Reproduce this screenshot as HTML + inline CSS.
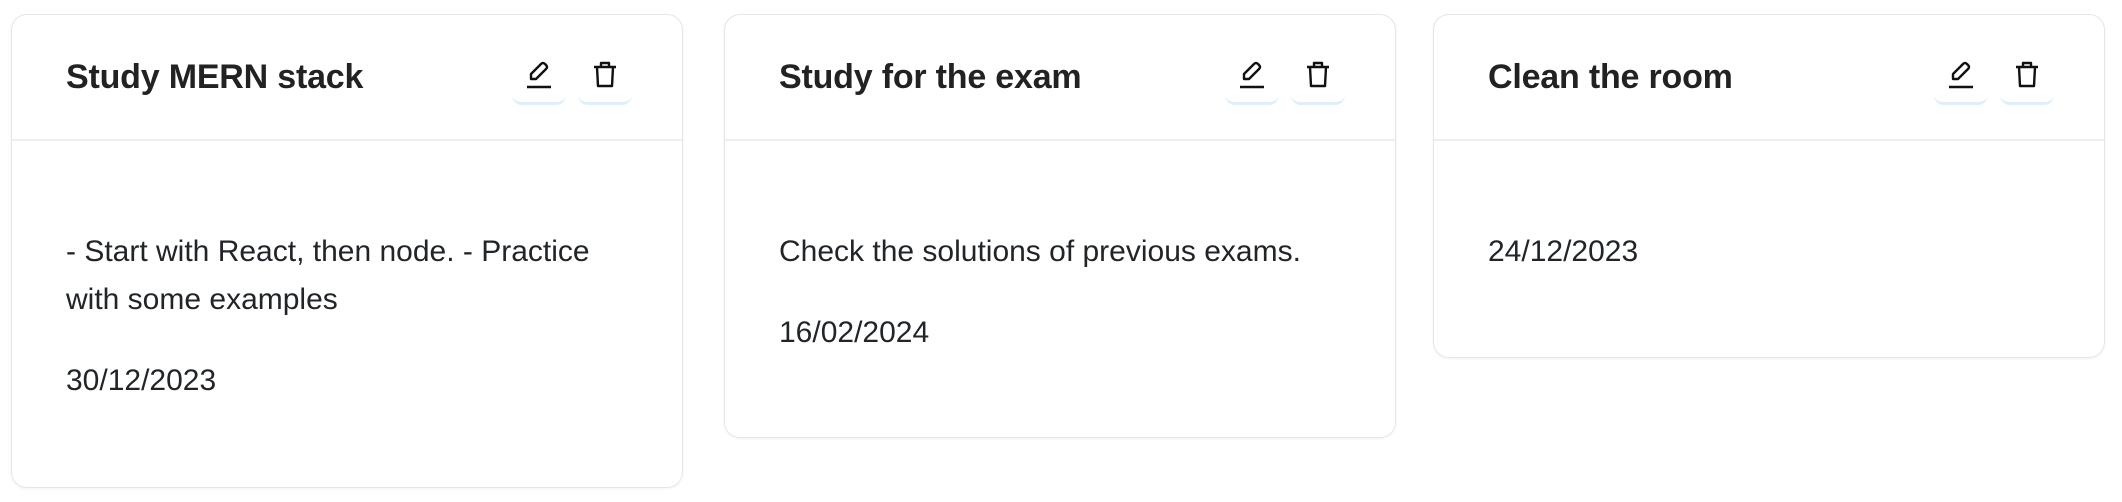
<!DOCTYPE html>
<html><head><style>
body{margin:0;width:2122px;height:502px;background:#fff;font-family:"Liberation Sans",sans-serif;color:#212529;position:relative;overflow:hidden}
.card{position:absolute;top:14px;width:672px;border:1px solid #e6e6e6;border-radius:16px;box-sizing:border-box;box-shadow:0 1px 3px rgba(0,0,0,0.05)}
.hd{height:124px;border-bottom:2px solid #eee;position:relative}
.t{position:absolute;left:54px;top:44px;font-size:34px;font-weight:bold;color:#222;line-height:36px;letter-spacing:-0.2px}
.btn{position:absolute;top:37px;width:54px;height:50px;border-radius:10px;border-bottom:3px solid #d9f1fc}
.btn svg{position:absolute;left:14px;top:8px}
.b1{left:500px}.b2{left:566px}
.bd{padding:87px 54px 0 54px;font-size:30px;line-height:48px;white-space:nowrap}
.d{margin-top:33px}
</style></head><body>
<div class="card" style="left:11px;height:474px">
<div class="hd"><div class="t">Study MERN stack</div>
<div class="btn b1"><svg width="26" height="30" viewBox="0 0 26 30" fill="none" stroke="#111" stroke-width="2.4" stroke-linejoin="round"><path d="M5 19 L5 14 L15 4 Q17 2 19 4 L20 5 Q22 7 20 9 L10 19 Z"/><path d="M1 27 H25"/></svg></div>
<div class="btn b2"><svg width="26" height="30" viewBox="0 0 26 30" fill="none" stroke="#111" stroke-width="2.4" stroke-linejoin="round"><path d="M2 7 H24"/><path d="M9 7 V3 H17 V7"/><path d="M5 7 L6 26 H20 L21 7"/></svg></div></div>
<div class="bd">- Start with React, then node. - Practice<br>with some examples<div class="d">30/12/2023</div></div>
</div>
<div class="card" style="left:724px;height:424px">
<div class="hd"><div class="t">Study for the exam</div>
<div class="btn b1"><svg width="26" height="30" viewBox="0 0 26 30" fill="none" stroke="#111" stroke-width="2.4" stroke-linejoin="round"><path d="M5 19 L5 14 L15 4 Q17 2 19 4 L20 5 Q22 7 20 9 L10 19 Z"/><path d="M1 27 H25"/></svg></div>
<div class="btn b2"><svg width="26" height="30" viewBox="0 0 26 30" fill="none" stroke="#111" stroke-width="2.4" stroke-linejoin="round"><path d="M2 7 H24"/><path d="M9 7 V3 H17 V7"/><path d="M5 7 L6 26 H20 L21 7"/></svg></div></div>
<div class="bd">Check the solutions of previous exams.<div class="d">16/02/2024</div></div>
</div>
<div class="card" style="left:1433px;height:344px">
<div class="hd"><div class="t">Clean the room</div>
<div class="btn b1"><svg width="26" height="30" viewBox="0 0 26 30" fill="none" stroke="#111" stroke-width="2.4" stroke-linejoin="round"><path d="M5 19 L5 14 L15 4 Q17 2 19 4 L20 5 Q22 7 20 9 L10 19 Z"/><path d="M1 27 H25"/></svg></div>
<div class="btn b2"><svg width="26" height="30" viewBox="0 0 26 30" fill="none" stroke="#111" stroke-width="2.4" stroke-linejoin="round"><path d="M2 7 H24"/><path d="M9 7 V3 H17 V7"/><path d="M5 7 L6 26 H20 L21 7"/></svg></div></div>
<div class="bd">24/12/2023</div>
</div>
</body></html>
